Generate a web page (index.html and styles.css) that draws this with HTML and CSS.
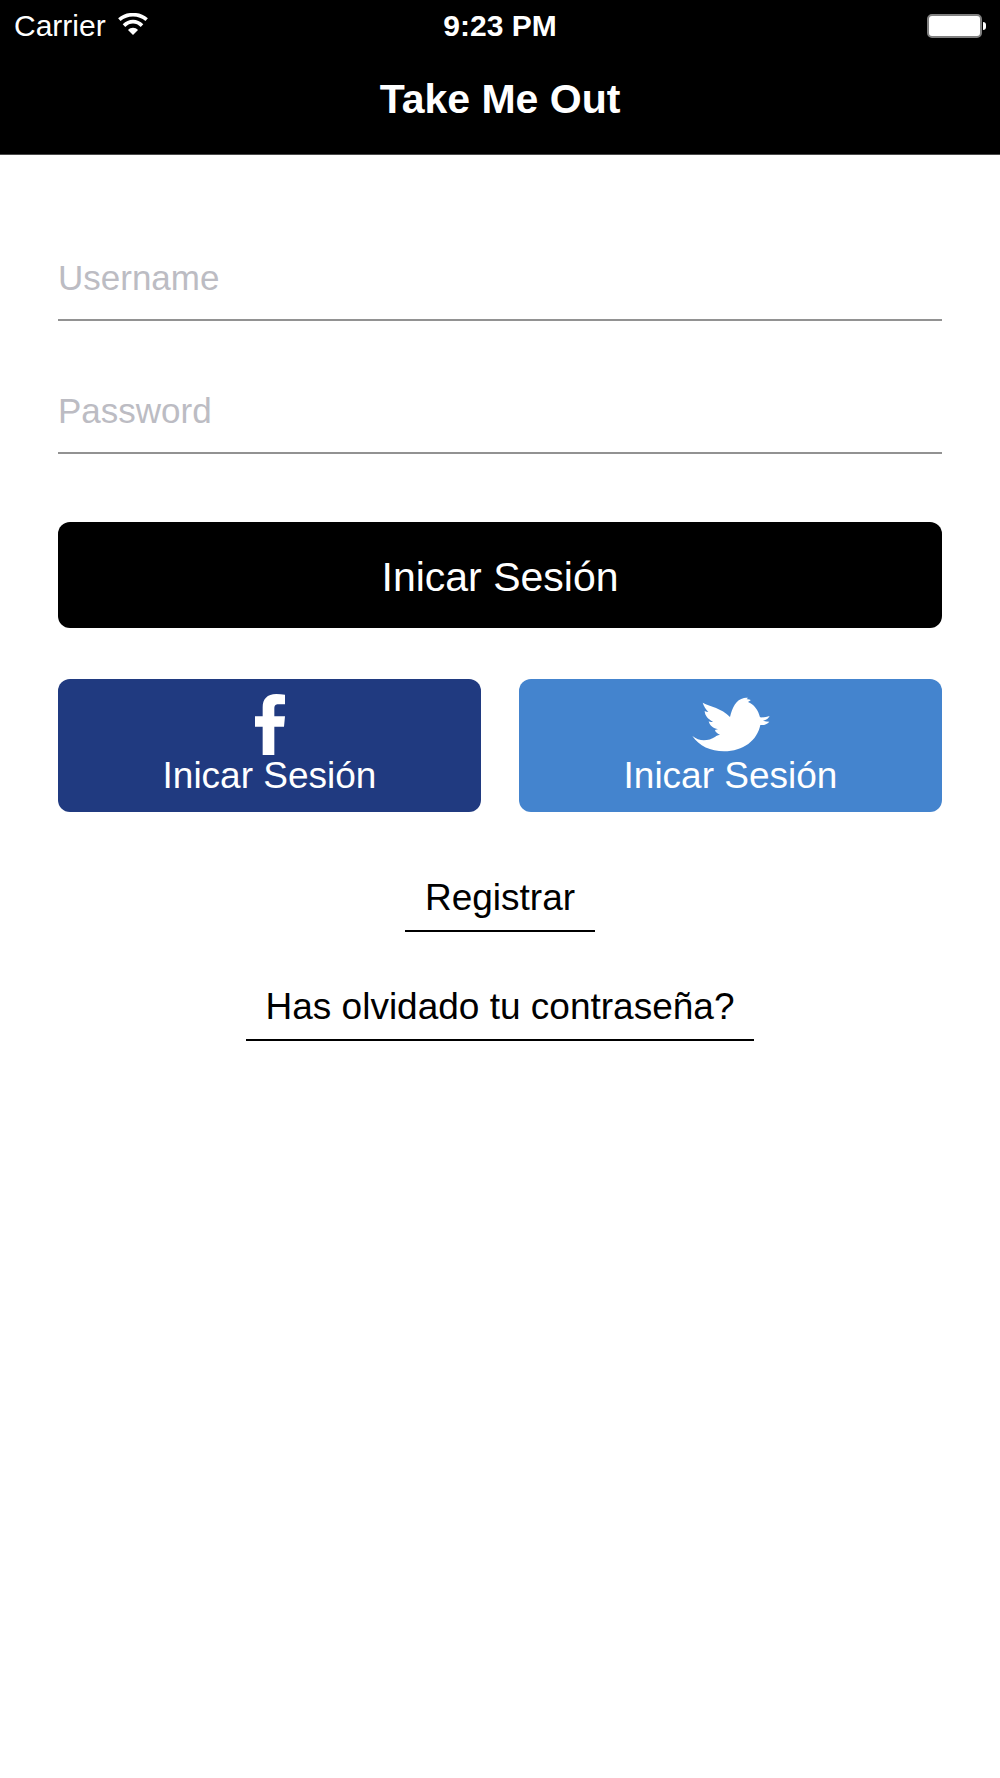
FILE: index.html
```html
<!DOCTYPE html>
<html lang="es">
<head>
    <meta charset="UTF-8">
    <meta name="viewport" content="width=device-width, initial-scale=1.0">
    <title>Take Me Out</title>
    <link rel="stylesheet" href="styles.css">
</head>
<body>
    <header class="header">
        <div class="status-bar">
            <div class="carrier">
                <span>Carrier</span>
                <svg class="wifi" viewBox="0 0 90 66" aria-hidden="true">
                    <path d="M4 20 C27 0 63 0 86 20" fill="none" stroke="#fff" stroke-width="11"/>
                    <path d="M18 38 C34 22 56 22 72 38" fill="none" stroke="#fff" stroke-width="11"/>
                    <path d="M30 51 C38 42 52 42 60 51 L45 66 Z" fill="#fff"/>
                </svg>
            </div>
            <span class="time">9:23 PM</span>
            <div class="battery">
                <div class="battery-body"></div>
                <div class="battery-cap"></div>
            </div>
        </div>
        <h1 class="title">Take Me Out</h1>
    </header>

    <main class="login">
        <form class="login-form">
            <input class="field" type="text" id="username" aria-label="Username" placeholder="Username">
            <input class="field" type="password" id="password" aria-label="Password" placeholder="Password">
            <button type="submit" class="btn btn-login">Inicar Sesión</button>
        </form>

        <div class="social">
            <button type="button" class="btn btn-social facebook">
                <svg class="icon" viewBox="44 40 90 183" aria-hidden="true">
                    <path fill="#fff" d="M134 42 Q121 40 108 40 C80 40 67 56 67 80 V107 H44 V138 H67 V223 H102 V138 H131 L134 107 H102 V84 C102 74 106 71 114 71 H134 Z"/>
                </svg>
                <span>Inicar Sesión</span>
            </button>
            <button type="button" class="btn btn-social twitter">
                <svg class="icon" viewBox="66 71 234 183" aria-hidden="true">
                    <path fill="#fff" d="M67 197 C88 214 114 213 136 199 C138 197 141 195 150 193 C141 189 136 185 135 179 C138 178 141 178 144 177 C130 174 119 166 116 153 C120 155 124 155 129 154 C114 146 105 137 104 122 C108 124 111 125 115 125 C108 116 101 108 98 97 C122 109 154 113 180 140 C187 112 198 88 222 83 C226 82 230 82 234 82 C233 84 231 85 230 87 C234 86 238 87 242 89 C240 92 237 93 234 95 C251 101 265 119 270 141 C280 142 290 140 299 137 C296 144 289 149 279 151 C286 153 292 154 298 154 C291 162 281 165 271 164 C262 210 220 243 162 243 C122 243 87 227 67 197 Z"/>
                </svg>
                <span>Inicar Sesión</span>
            </button>
        </div>

        <nav class="links">
            <a href="#registrar">Registrar</a>
            <a href="#recuperar">Has olvidado tu contraseña?</a>
        </nav>
    </main>
</body>
</html>
```

FILE: styles.css
```css
* {
    box-sizing: border-box;
}

body {
    margin: 0;
    background-color: #fff;
    color: #000;
    font-family: "Liberation Sans", Arial, sans-serif;
}

/* Header */
.header {
    padding: 9px 14px 32px;
    background-color: #000;
    border-bottom: 1px solid #4a4a4a;
    color: #fff;
}

.status-bar {
    display: grid;
    grid-template-columns: 1fr auto 1fr;
    align-items: center;
    font-size: 30px;
    line-height: 34px;
}

.carrier {
    display: flex;
    align-items: center;
    gap: 12px;
}

.wifi {
    width: 30px;
    height: 22px;
    margin-bottom: 4px;
}

.time {
    font-weight: bold;
}

.battery {
    display: flex;
    align-items: center;
    justify-content: flex-end;
    gap: 1px;
}

.battery-body {
    width: 55px;
    height: 24px;
    background-color: #fff;
    border: 2px solid #808080;
    border-radius: 5px;
}

.battery-cap {
    width: 3px;
    height: 8px;
    background-color: #fff;
    border-radius: 0 4px 4px 0;
}

.title {
    margin: 33px 0 0;
    font-size: 41px;
    line-height: 46px;
    text-align: center;
}

/* Login form */
.login {
    padding: 101px 58px 0;
}

.login-form {
    display: flex;
    flex-direction: column;
    gap: 68px;
}

.field {
    width: 100%;
    height: 65px;
    padding: 2px 0 21px;
    border: none;
    border-bottom: 2px solid #929292;
    border-radius: 0;
    outline: none;
    background-color: transparent;
    font-family: inherit;
    font-size: 35px;
    line-height: 40px;
}

.field::placeholder {
    color: #bcbcc3;
    opacity: 1;
}

.btn {
    border: none;
    border-radius: 12px;
    color: #fff;
    font-family: inherit;
    cursor: pointer;
}

.btn-login {
    padding: 31px 0 27px;
    background-color: #000;
    font-size: 41px;
    line-height: 48px;
}

/* Social buttons */
.social {
    display: grid;
    grid-template-columns: 1fr 1fr;
    gap: 38px;
    margin-top: 51px;
}

.btn-social {
    display: flex;
    flex-direction: column;
    align-items: center;
    padding: 15px 0;
    font-size: 37px;
    line-height: 42px;
}

.icon {
    height: 61px;
}

.facebook {
    background-color: #203a80;
}

.twitter {
    background-color: #4484ce;
}

/* Links */
.links {
    display: flex;
    flex-direction: column;
    align-items: center;
    gap: 54px;
    margin-top: 65px;
}

.links a {
    padding: 0 20px 11px;
    border-bottom: 2px solid #000;
    color: #000;
    font-size: 37px;
    line-height: 42px;
    text-decoration: none;
}
```
